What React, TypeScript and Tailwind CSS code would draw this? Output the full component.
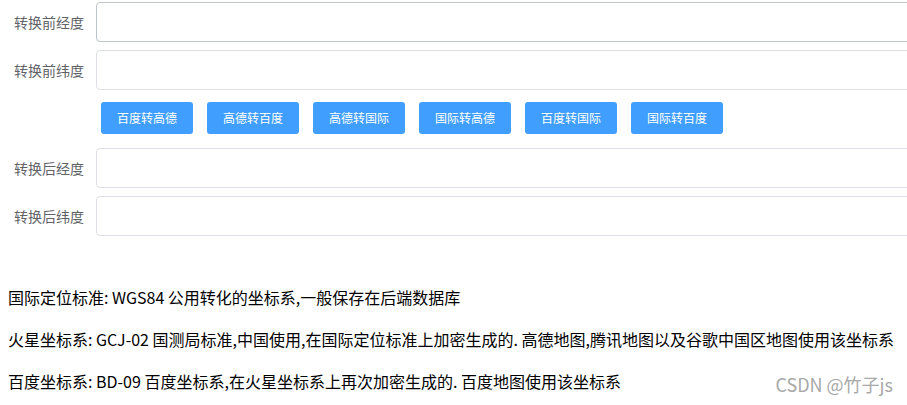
import React from "react";

const fields = ["转换前经度", "转换前纬度"];
const afterFields = ["转换后经度", "转换后纬度"];
const actions = ["百度转高德", "高德转百度", "高德转国际", "国际转高德", "百度转国际", "国际转百度"];

function Field({ label, hover }: { label: string; hover?: boolean }) {
  return (
    <div className="flex items-center h-10 mb-2">
      <label className="w-[96px] shrink-0 pr-3 text-right text-[14px] text-[#606266]">{label}</label>
      <input
        className={
          hover
            ? "h-10 w-[840px] shrink-0 rounded border border-[#c0c4cc] bg-white px-[15px] text-[14px] outline-none"
            : "h-10 w-[840px] shrink-0 rounded border border-[#dcdfe6] bg-white px-[15px] text-[14px] outline-none"
        }
      />
    </div>
  );
}

export default function App() {
  return (
    <div
      className="relative w-full h-[405px] overflow-hidden bg-white"
      style={{ fontFamily: '"Microsoft YaHei", "Noto Sans CJK SC", "Noto Sans", sans-serif' }}
    >
      <form className="pt-[2px]">
        <Field label={fields[0]} hover />
        <Field label={fields[1]} />

        {/* conversion buttons */}
        <div className="flex gap-[14px] pl-[101px] mt-[12px] mb-[14px]">
          {actions.map((a) => (
            <button
              key={a}
              type="button"
              className="h-8 w-[92px] rounded-[3px] bg-[#409eff] text-[12px] text-white"
            >
              {a}
            </button>
          ))}
        </div>

        {afterFields.map((f) => (
          <Field key={f} label={f} />
        ))}
      </form>

      <div className="pl-2 text-[16px] leading-[26px] text-black">
        <p className="mt-[48px]">国际定位标准: WGS84 公用转化的坐标系,一般保存在后端数据库</p>
        <p className="mt-4">
          火星坐标系: GCJ-02 国测局标准,中国使用,在国际定位标准上加密生成的. 高德地图,腾讯地图以及谷歌中国区地图使用该坐标系
        </p>
        <p className="mt-4">百度坐标系: BD-09 百度坐标系,在火星坐标系上再次加密生成的. 百度地图使用该坐标系</p>
      </div>

      <div className="absolute right-[14px] bottom-[7px] text-[18px] text-[#a8a8a8]">CSDN @竹子js</div>
    </div>
  );
}
